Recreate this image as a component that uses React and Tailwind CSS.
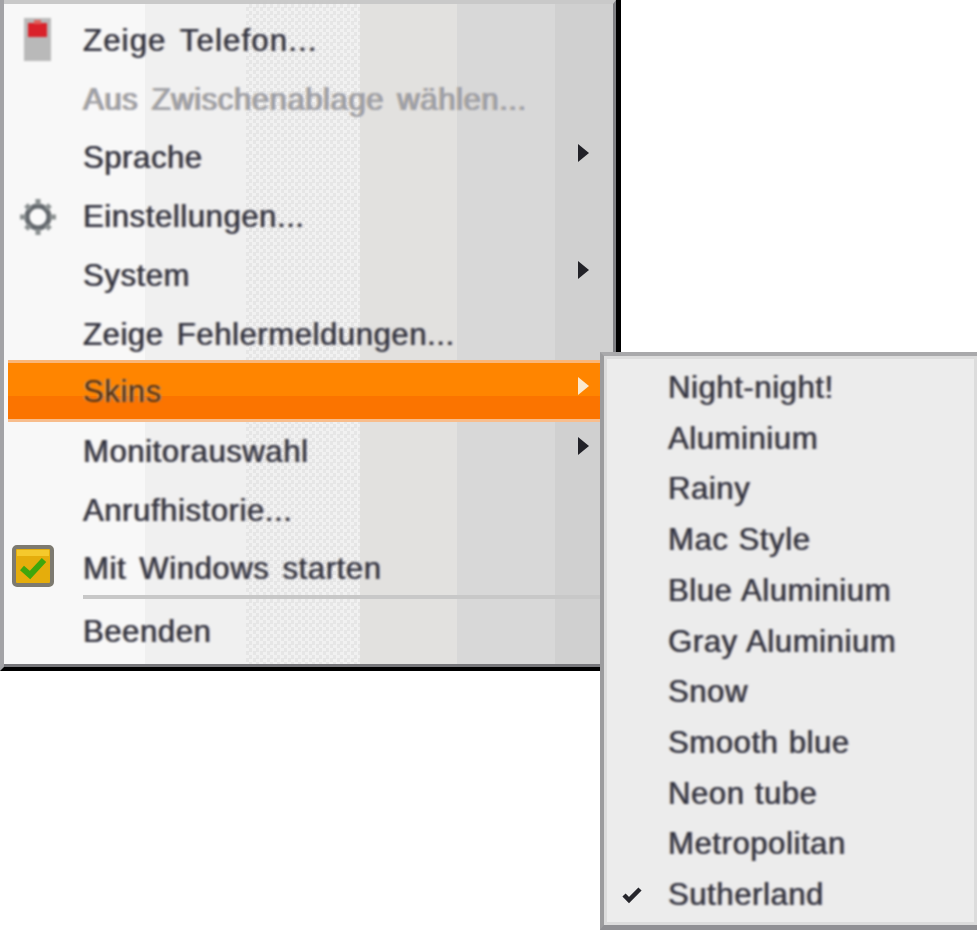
import React from 'react';

const mainItems = [
  { label: 'Zeige Telefon...', icon: 'phone', iconClass: 'pl-[7px]', textClass: 'tracking-[1.2px]' },
  { label: 'Aus Zwischenablage wählen...', disabled: true },
  { label: 'Sprache', arrow: true },
  { label: 'Einstellungen...', icon: 'gear', iconClass: 'pl-[8px]' },
  { label: 'System', arrow: true },
  { label: 'Zeige Fehlermeldungen...' },
  { label: 'Skins', arrow: true, active: true },
  { label: 'Monitorauswahl', arrow: true },
  { label: 'Anrufhistorie...' },
  { label: 'Mit Windows starten', icon: 'check', iconClass: 'pl-[3px] -mt-[8px]' },
];

const skins = ['Night-night!', 'Aluminium', 'Rainy', 'Mac Style', 'Blue Aluminium', 'Gray Aluminium', 'Snow', 'Smooth blue', 'Neon tube', 'Metropolitan', 'Sutherland'];

const textLook = "blur-[0.9px] [text-shadow:1px_0_#7f93bb,-1px_0_#d9b98f]";

const PhoneIcon = () => (
  <svg width="44" height="50" viewBox="0 0 44 50" className="blur-[0.8px]">
    <rect x="9" y="2" width="27" height="43" fill="#b9b9b9" />
    <rect x="13" y="7" width="19" height="14" fill="#d9222a" />
    <rect x="19" y="4" width="7" height="4" fill="#e0605a" />
  </svg>
);

const GearIcon = () => (
  <svg width="44" height="44" viewBox="0 0 44 44" className="blur-[1.1px]">
    <circle cx="22" cy="22" r="11" fill="#fafafa" stroke="#62676c" strokeWidth="5" />
    <g stroke="#8a8f90" strokeWidth="5">
      <path d="M22 4v6M22 34v6M4 22h6M34 22h6" />
      <path d="M10 10l4 4M30 30l4 4M10 34l4-4M30 14l4-4" />
    </g>
  </svg>
);

const CheckIcon = () => (
  <svg width="44" height="44" viewBox="0 0 44 44" className="blur-[0.7px]">
    <rect x="3" y="3" width="38" height="38" rx="3" fill="#e5ad0c" stroke="#7d7a70" strokeWidth="4" />
    <rect x="6" y="6" width="32" height="6" fill="#f5c92c" />
    <path d="M11 24l8 7 14-15" fill="none" stroke="#3fa60c" strokeWidth="6" />
  </svg>
);

const icons = { phone: <PhoneIcon />, gear: <GearIcon />, check: <CheckIcon /> };

const Arrow = ({ color }) => (
  <svg width="12" height="20" viewBox="0 0 12 20" className="blur-[0.5px]">
    <path d="M1 1l11 9L1 19z" fill={color} />
  </svg>
);

const MainRow = ({ item }) => {
  let rowClass = 'h-[58.7px] text-[#33333f]';
  if (item.disabled) rowClass = 'h-[58.7px] text-[#a2a2a6]';
  if (item.active) rowClass = '-mt-[4px] mb-[0.7px] h-[62px] pt-[2px] text-[#5c2c00] bg-[linear-gradient(180deg,#f9b67a_0,#f9b67a_3px,#ff8500_3px,#ff8500_36px,#fb7400_36px,#fb7400_59px,#f8bd8c_59px)]';
  return (
    <div className={`flex items-center ${rowClass}`}>
      <div className={`flex w-[75px] shrink-0 justify-start ${item.iconClass || ''}`}>{icons[item.icon]}</div>
      <span className={`${textLook} ${item.textClass || ''}`}>{item.label}</span>
      {item.arrow && (
        <div className="ml-auto mr-[24px] -mt-[12px] flex">
          <Arrow color={item.active ? '#fbe9cf' : '#222228'} />
        </div>
      )}
    </div>
  );
};

const App = () => (
  <div className="relative h-[930px] w-[977px] overflow-hidden bg-white font-['Liberation_Sans',sans-serif] text-[31px] tracking-[0.6px] [word-spacing:4px]">
    <div className="h-[671px] w-[621px] border-r-[5px] border-b-[4px] border-l-[4px] border-r-black border-b-black border-l-[#a3a3a6]">
      <div className="h-full border-t-[4px] border-r-[3px] border-b-[3px] border-t-[#c9c9c9] border-r-[#808084] border-b-[#77777b] bg-[linear-gradient(90deg,#f8f8f8_0,#f8f8f8_141px,#f0f0f0_141px,#f0f0f0_242px,transparent_242px,transparent_356px,#e2e1df_356px,#e2e1df_453px,#d8d8d8_453px,#d8d8d8_551px,#d0d0d0_551px),repeating-conic-gradient(#f1f1f1_0_25%,#e6e6e6_0_50%)] bg-[length:100%_100%,7px_7px]">
        <div className="pt-[8px] pl-[4px]">
          {mainItems.map((item) => (
            <MainRow key={item.label} item={item} />
          ))}
          <div className="-mt-[4px] ml-[75px] h-[4px] bg-[#c8c8c8]" />
          <div className="mt-[3px] flex h-[60px] items-center pl-[75px] text-[#33333f]">
            <span className={textLook}>Beenden</span>
          </div>
        </div>
      </div>
    </div>

    {/* Untermenü liegt über dem Hauptmenü */}
    <div className="absolute top-[352px] left-[600px] h-[578px] w-[377px] border-t-[4px] border-l-[4px] border-b-[5px] border-t-[#a9a9ab] border-l-[#9c9c9e] border-b-[#909094] [word-spacing:1px]">
      <div className="h-full border-t-[3px] border-r-[3px] border-b-[3px] border-l-[3px] border-[#dcdcdc] bg-[#ececec] pt-[4px] text-[#33333f]">
        {skins.map((name) => (
          <div key={name} className="flex h-[50.7px] items-center">
            <div className="flex w-[61px] shrink-0 justify-end pr-[26px]">
              {name === 'Sutherland' && (
                <svg width="20" height="20" viewBox="0 0 20 20" className="blur-[0.6px]">
                  <path d="M2 10l5 5L18 4" fill="none" stroke="#26262c" strokeWidth="4.5" />
                </svg>
              )}
            </div>
            <span className={textLook}>{name}</span>
          </div>
        ))}
      </div>
    </div>
  </div>
);

export default App;
